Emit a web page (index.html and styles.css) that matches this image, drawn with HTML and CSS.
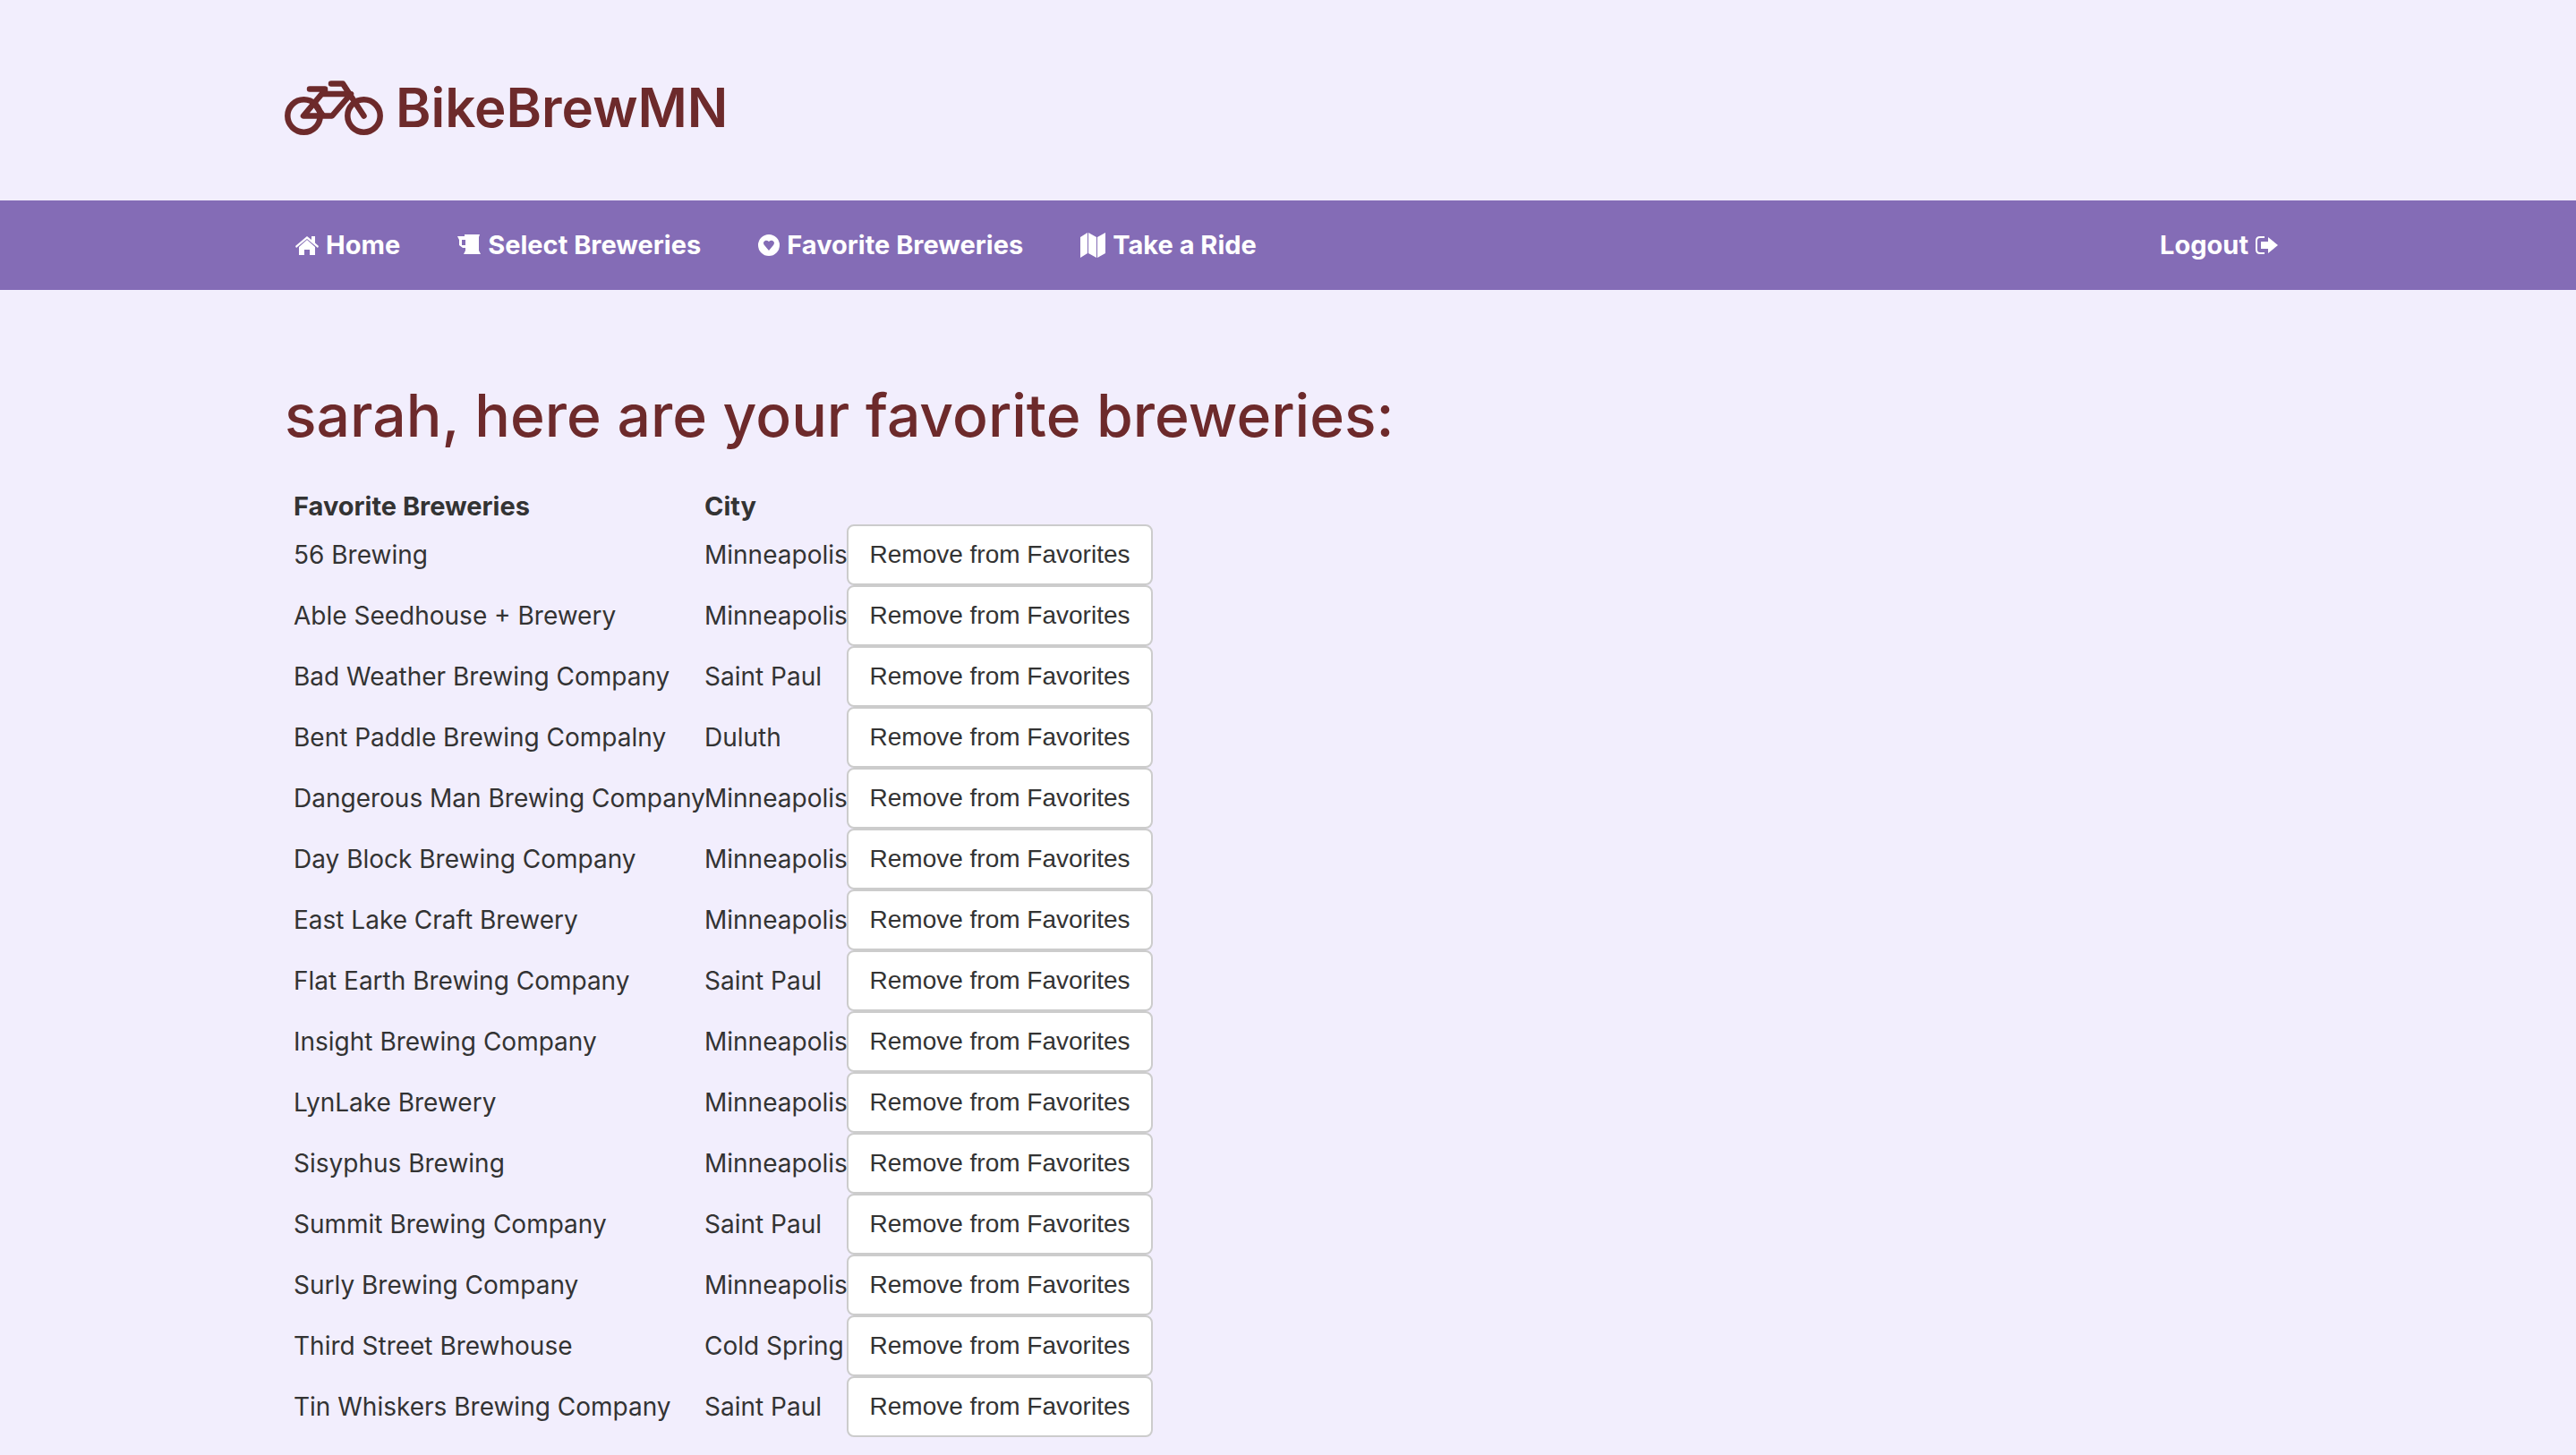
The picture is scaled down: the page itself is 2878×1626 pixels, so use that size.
FILE: index.html
```html
<!DOCTYPE html>
<html lang="en">
<head>
<meta charset="utf-8">
<title>BikeBrewMN</title>
<link rel="stylesheet" href="styles.css">
</head>
<body>
<header class="header">
  <div class="container brand">
    <svg class="brand-icon" viewBox="0 0 110 61" aria-hidden="true">
      <g fill="none" stroke="currentColor" stroke-width="6.500">
        <circle cx="21.500" cy="39.500" r="18.200"/><circle cx="88.500" cy="39.500" r="18.200"/>
        <path d="M28 9.500H45V15M44 12L21 39.500H53L74 15H42M52 3.500H65L88.500 39.500" stroke-linecap="round" stroke-linejoin="round"/>
        <path d="M32 24L43 39.500"/>
      </g>
    </svg>
    <span class="brand-name">BikeBrewMN</span>
  </div>
</header>
<nav class="nav">
  <div class="container nav-row">
    <a class="nav-link" href="#"><svg class="icon" viewBox="0 0 26 28" aria-hidden="true"><path fill="currentColor" d="M13 8L4 16V25H10V19H16V25H22V16ZM13 4L0 15L1 17L13 7L25 17L26 15L22 11.500V4H18V8Z"/></svg>Home</a>
    <a class="nav-link" href="#"><svg class="icon" viewBox="0 0 26 28" aria-hidden="true"><path fill="currentColor" fill-rule="evenodd" d="M0 4H8V2H25L24 5V20L26 24H7L9 20V17H6L2 14V8ZM5 8V14H9V8Z"/></svg>Select Breweries</a>
    <a class="nav-link" href="#"><svg class="icon icon-heart" viewBox="0 0 24 28" aria-hidden="true"><path fill="currentColor" fill-rule="evenodd" d="M12 2A12 12 0 1 1 12 26A12 12 0 1 1 12 2ZM12 20L17 14C20 10 15 7 12 10C9 7 4 10 7 14Z"/></svg>Favorite Breweries</a>
    <a class="nav-link" href="#"><svg class="icon icon-map" viewBox="0 0 28 28" aria-hidden="true"><path fill="currentColor" d="M0 5L8 0V23L0 28ZM9 0L18 5V28L9 23ZM19 5L28 0V23L19 28Z"/></svg>Take a Ride</a>
    <a class="nav-link nav-logout" href="#">Logout<svg class="icon" viewBox="0 0 26 28" aria-hidden="true"><path fill="none" stroke="currentColor" stroke-width="2" d="M10 5H5Q1 5 1 9V19Q1 23 5 23H10"/><path fill="currentColor" d="M6 10H14V5L25 14L14 23V18H6Z"/></svg></a>
  </div>
</nav>
<main class="container main">
  <h1 class="title">sarah, here are your favorite breweries:</h1>
  <table class="table">
    <colgroup><col class="col-name"><col class="col-city"><col class="col-action"></colgroup>
    <thead><tr><th class="name">Favorite Breweries</th><th>City</th><td></td></tr></thead>
    <tbody>
      <tr><td class="name">56 Brewing</td><td>Minneapolis</td><td><button class="btn" type="button">Remove from Favorites</button></td></tr>
      <tr><td class="name">Able Seedhouse + Brewery</td><td>Minneapolis</td><td><button class="btn" type="button">Remove from Favorites</button></td></tr>
      <tr><td class="name">Bad Weather Brewing Company</td><td>Saint Paul</td><td><button class="btn" type="button">Remove from Favorites</button></td></tr>
      <tr><td class="name">Bent Paddle Brewing Compalny</td><td>Duluth</td><td><button class="btn" type="button">Remove from Favorites</button></td></tr>
      <tr><td class="name">Dangerous Man Brewing Company</td><td>Minneapolis</td><td><button class="btn" type="button">Remove from Favorites</button></td></tr>
      <tr><td class="name">Day Block Brewing Company</td><td>Minneapolis</td><td><button class="btn" type="button">Remove from Favorites</button></td></tr>
      <tr><td class="name">East Lake Craft Brewery</td><td>Minneapolis</td><td><button class="btn" type="button">Remove from Favorites</button></td></tr>
      <tr><td class="name">Flat Earth Brewing Company</td><td>Saint Paul</td><td><button class="btn" type="button">Remove from Favorites</button></td></tr>
      <tr><td class="name">Insight Brewing Company</td><td>Minneapolis</td><td><button class="btn" type="button">Remove from Favorites</button></td></tr>
      <tr><td class="name">LynLake Brewery</td><td>Minneapolis</td><td><button class="btn" type="button">Remove from Favorites</button></td></tr>
      <tr><td class="name">Sisyphus Brewing</td><td>Minneapolis</td><td><button class="btn" type="button">Remove from Favorites</button></td></tr>
      <tr><td class="name">Summit Brewing Company</td><td>Saint Paul</td><td><button class="btn" type="button">Remove from Favorites</button></td></tr>
      <tr><td class="name">Surly Brewing Company</td><td>Minneapolis</td><td><button class="btn" type="button">Remove from Favorites</button></td></tr>
      <tr><td class="name">Third Street Brewhouse</td><td>Cold Spring</td><td><button class="btn" type="button">Remove from Favorites</button></td></tr>
      <tr><td class="name">Tin Whiskers Brewing Company</td><td>Saint Paul</td><td><button class="btn" type="button">Remove from Favorites</button></td></tr>
    </tbody>
  </table>
</main>
</body>
</html>
```
FILE: styles.css
```css
* { box-sizing: border-box; }
body {
  margin: 0;
  background: #f2eefd;
  color: #333;
  font: 28px/40px Inter, "Liberation Sans", sans-serif;
}
.container { max-width: 2242px; margin: 0 auto; }
.header { padding: 80px 0 64px; color: #6d2a2b; }
.brand { display: flex; align-items: center; gap: 14px; }
.brand-icon { width: 110px; height: 61px; }
.brand-name { font-size: 60px; line-height: 80px; font-weight: 600; }
.nav { background: #846cb6; color: #fff; }
.nav-row { display: flex; gap: 64px; padding: 30px 14px 30px 12px; }
.nav-link {
  display: flex;
  align-items: center;
  gap: 8px;
  color: inherit;
  font-size: 29px;
  font-weight: 700;
  text-decoration: none;
}
.nav-logout { margin-left: auto; }
.icon { width: 26px; height: 28px; }
.icon-heart { width: 24px; }
.icon-map { width: 28px; }
.main { padding: 100px 0 20px; }
.title {
  margin: 0 0 42px;
  color: #6d2a2b;
  font-size: 66px;
  line-height: 80px;
  font-weight: 500;
}
.table { width: 970px; table-layout: fixed; border-collapse: collapse; }
.table th, .table td { padding: 0; text-align: left; white-space: nowrap; }
.table th { font-size: 29px; font-weight: 700; }
.table .name { padding-left: 10px; }
.col-name { width: 469px; }
.col-city { width: 159px; }
.col-action { width: 342px; }
.btn {
  display: block;
  width: 100%;
  height: 68px;
  padding: 0 22px;
  border: 2px solid #ccc;
  border-radius: 8px;
  background: #fff;
  color: #333;
  font: 28px/40px "Liberation Sans", sans-serif;
}
```
